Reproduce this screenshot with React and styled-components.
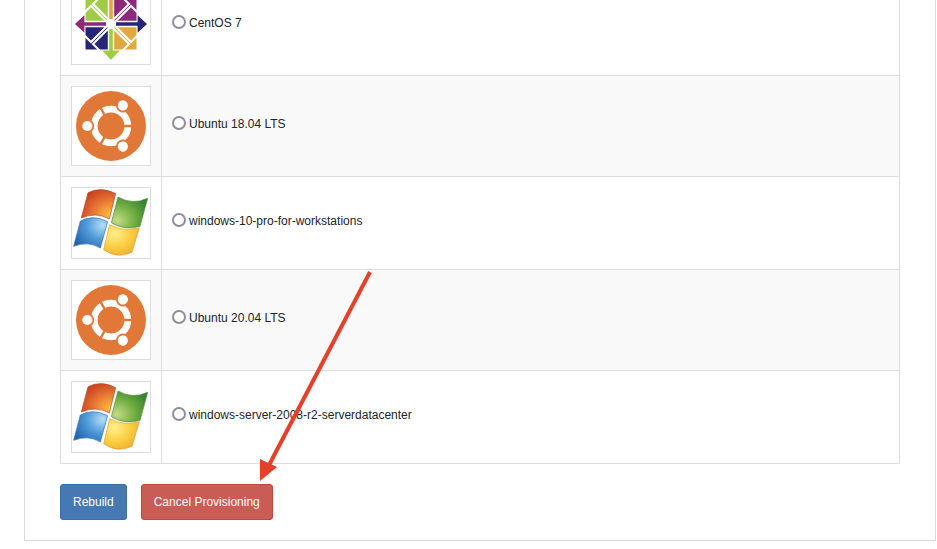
import React from 'react'

import styled, { createGlobalStyle } from "styled-components";

const options = [
  { id: "centos-7", name: "CentOS 7", logo: CentosLogo },
  { id: "ubuntu-18", name: "Ubuntu 18.04 LTS", logo: UbuntuLogo },
  { id: "windows-10", name: "windows-10-pro-for-workstations", logo: WindowsLogo },
  { id: "ubuntu-20", name: "Ubuntu 20.04 LTS", logo: UbuntuLogo },
  { id: "windows-2008", name: "windows-server-2008-r2-serverdatacenter", logo: WindowsLogo },
];

export default function App() {
  return (
    <Page>
      <GlobalStyle />
      <Panel>
        <OsTable>
          <tbody>
            {options.map(({ id, name, logo: Logo }) => (
              <tr key={id}>
                <LogoCell>
                  <Thumbnail><Logo /></Thumbnail>
                </LogoCell>
                <NameCell>
                  <Option htmlFor={id}>
                    <Radio type="radio" name="os" id={id} value={id} />
                    {name}
                  </Option>
                </NameCell>
              </tr>
            ))}
          </tbody>
        </OsTable>
        <Actions>
          <Button type="button">Rebuild</Button>
          <Button type="button" $danger>Cancel Provisioning</Button>
        </Actions>
      </Panel>
      <Arrow width="120" height="212" viewBox="0 0 120 212" aria-hidden="true">
        <path d="M112 1 L10 196" stroke="#e5402a" strokeWidth="4" />
        <path d="M2 210 L2 188 L19 196 Z" fill="#e5402a" />
      </Arrow>
    </Page>
  )
}

function CentosLogo() {
  const outline = "M0 2 L18 20 L0 38 L-18 20 Z";
  return (
    <svg width="78" height="78" viewBox="-39 -38 78 78" aria-hidden="true">
      <path d="M-25.5 -25.5H0V0H-25.5Z" fill="#a0cb48" />
      <path d="M0 -25.5H25.5V0H0Z" fill="#8a2a78" />
      <path d="M-25.5 0H0V25.5H-25.5Z" fill="#262577" />
      <path d="M0 0H25.5V25.5H0Z" fill="#e3a740" />
      {[["#a0cb48", 0], ["#8a2a78", 90], ["#e3a740", 180], ["#262577", 270]].map(([color, angle]) => (
        <g key={angle} transform={`rotate(${angle})`}>
          <path d={outline} fill="none" stroke="#fff" strokeWidth="2" />
          <path d="M-3.2 3H3.2V26H9L0 36L-9 26H-3.2Z" fill="#fff" />
          <path d="M-1.8 5H1.8V26.6H8.8L0 36L-8.8 26.6H-1.8Z" fill={color} />
        </g>
      ))}
      <circle r="4.5" fill="#fff" />
    </svg>
  )
}

function UbuntuLogo() {
  return (
    <svg width="78" height="78" viewBox="-39 -39 78 78" aria-hidden="true">
      <circle r="35" fill="#e27837" />
      <circle r="16.8" fill="none" stroke="#fff" strokeWidth="6.8" />
      {[0, 120, 240].map((angle) => (
        <g key={angle} transform={`rotate(${angle})`}>
          <path d="M12 0H22" stroke="#e27837" strokeWidth="2.4" />
          <circle cx="-23.7" r="6.9" fill="#e27837" />
          <circle cx="-23.7" r="5.1" fill="#fff" />
        </g>
      ))}
    </svg>
  )
}

function WindowsLogo() {
  return (
    <svg width="78" height="70" viewBox="0 0 234 210" aria-hidden="true">
      <defs>
        <radialGradient id="flagRed" cx="0.85" cy="0.85" r="0.95">
          <stop offset="0" stopColor="#fbc03c" />
          <stop offset="0.5" stopColor="#e87a35" />
          <stop offset="1" stopColor="#c83f20" />
        </radialGradient>
        <radialGradient id="flagGreen" cx="0.15" cy="0.75" r="0.95">
          <stop offset="0" stopColor="#c4db85" />
          <stop offset="0.5" stopColor="#75b043" />
          <stop offset="1" stopColor="#34822f" />
        </radialGradient>
        <radialGradient id="flagBlue" cx="0.85" cy="0.25" r="0.95">
          <stop offset="0" stopColor="#b4dcf7" />
          <stop offset="0.5" stopColor="#4e9ad8" />
          <stop offset="1" stopColor="#2264b0" />
        </radialGradient>
        <radialGradient id="flagYellow" cx="0.3" cy="0.3" r="0.9">
          <stop offset="0" stopColor="#fff08a" />
          <stop offset="0.5" stopColor="#fbcd42" />
          <stop offset="1" stopColor="#e8a52c" />
        </radialGradient>
      </defs>
      <path d="M48 14 Q88 -6 131 17 L112 93 Q72 71 28 90 Z" fill="url(#flagRed)" stroke="#b8482a" strokeWidth="2" />
      <path d="M138 27 Q182 52 227 31 L204 115 Q158 129 118 104 Z" fill="url(#flagGreen)" stroke="#4b8a35" strokeWidth="2" />
      <path d="M25 99 Q62 78 107 101 L85 180 Q48 158 5 175 Z" fill="url(#flagBlue)" stroke="#3470ad" strokeWidth="2" />
      <path d="M113 110 Q155 133 202 119 L180 193 Q135 214 95 185 Z" fill="url(#flagYellow)" stroke="#d99c30" strokeWidth="2" />
    </svg>
  )
}

const GlobalStyle = createGlobalStyle`
  body {
    margin: 0;
    background: #fff;
  }
  * {
    box-sizing: border-box;
  }
`

const Page = styled.main`
  position: relative;
  overflow: hidden;
  color: #212529;
  font-family: "Liberation Sans", Arial, sans-serif;
  font-size: 12px;
  line-height: 20px;
`

/* pulled up so the list looks scrolled down to its last rows */
const Panel = styled.section`
  margin: -62px 1px 8px 24px;
  padding: 35px 35px 20px;
  border: 1px solid #ddd;
`

const OsTable = styled.table`
  width: 100%;
  border-collapse: collapse;
  tr:nth-child(even) {
    background: #f9f9f9;
  }
  td {
    padding: 10px;
    border: 1px solid #ddd;
    vertical-align: middle;
  }
`

const LogoCell = styled.td`
  width: 101px;
`

const NameCell = styled.td`
  text-align: left;
`

const Thumbnail = styled.div`
  width: 80px;
  border: 1px solid #ddd;
  background: #fff;
  svg {
    display: block;
  }
`

const Option = styled.label`
  display: flex;
  align-items: flex-start;
  gap: 3px;
  margin-bottom: 5px;
`

const Radio = styled.input`
  appearance: none;
  width: 14px;
  height: 14px;
  margin: 2px 0 0;
  border: 2px solid #8f8f9d;
  border-radius: 50%;
  background: #fff;
  &:checked {
    border-width: 4px;
    border-color: #4678b2;
  }
`

const Actions = styled.div`
  display: flex;
  gap: 14px;
  margin-top: 20px;
`

const Button = styled.button`
  padding: 7px 12px;
  border: 1px solid ${({ $danger }) => ($danger ? "#c2463f" : "#3a6ca5")};
  border-radius: 3px;
  background: ${({ $danger }) => ($danger ? "#c95c54" : "#4678b2")};
  color: #fff;
  font-family: inherit;
  font-size: 12px;
  line-height: 20px;
  cursor: pointer;
`

const Arrow = styled.svg`
  position: absolute;
  top: 271px;
  left: 258px;
  pointer-events: none;
`
